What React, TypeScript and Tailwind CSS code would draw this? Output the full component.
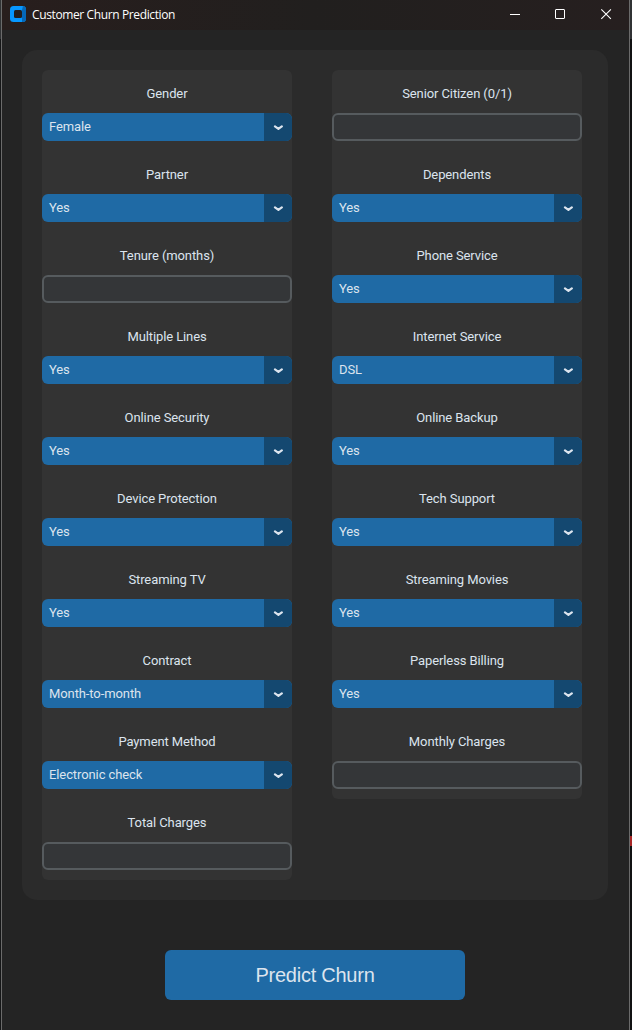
type Field = { label: string; value?: string };

const left: Field[] = [
  { label: "Gender", value: "Female" },
  { label: "Partner", value: "Yes" },
  { label: "Tenure (months)" },
  { label: "Multiple Lines", value: "Yes" },
  { label: "Online Security", value: "Yes" },
  { label: "Device Protection", value: "Yes" },
  { label: "Streaming TV", value: "Yes" },
  { label: "Contract", value: "Month-to-month" },
  { label: "Payment Method", value: "Electronic check" },
  { label: "Total Charges" },
];

const right: Field[] = [
  { label: "Senior Citizen (0/1)" },
  { label: "Dependents", value: "Yes" },
  { label: "Phone Service", value: "Yes" },
  { label: "Internet Service", value: "DSL" },
  { label: "Online Backup", value: "Yes" },
  { label: "Tech Support", value: "Yes" },
  { label: "Streaming Movies", value: "Yes" },
  { label: "Paperless Billing", value: "Yes" },
  { label: "Monthly Charges" },
];

function FieldRow({ label, value }: Field) {
  return (
    <div className="flex h-[81px] flex-col pt-2.5">
      <label className="h-7 text-center leading-[27px]">{label}</label>
      {value ? (
        <button className="mt-[5px] flex h-7 overflow-hidden rounded-md bg-[#1f6aa5] text-left">
          <span className="h-7 w-[222px] pl-[7px] leading-[27px]">{value}</span>
          <span className="flex h-7 w-7 items-center justify-center bg-[#144870]">
            <svg width="10" height="6" viewBox="0 0 10 6" className="mt-0.5" fill="none" stroke="#dce4ee" strokeWidth="2.2" strokeLinecap="round" strokeLinejoin="round">
              <path d="M2 1.4 L5.4 3.8 L8.8 1.4" />
            </svg>
          </span>
        </button>
      ) : (
        <input aria-label={label} className="mt-[5px] h-7 rounded-md border-2 border-[#565b5e] bg-[#343638] px-2 outline-none" />
      )}
    </div>
  );
}

function Column({ fields }: { fields: Field[] }) {
  return (
    <div className="w-[250px] rounded-md bg-[#333333]">
      {fields.map((f) => (
        <FieldRow key={f.label} {...f} />
      ))}
    </div>
  );
}

export default function App() {
  return (
    <div className="flex h-[1030px] w-[632px] bg-[#111213] font-['Roboto',sans-serif] text-[13px] tracking-[-0.1px] text-[#dce4ee]">
      <div className="flex w-px flex-col bg-[#151617]">
        <div className="h-[39px] bg-[#303234]" />
      </div>
      <div className="flex h-full w-[629px] flex-col border-x border-[#6b6b6b] bg-[#242424]">
        <header className="flex h-[30px] shrink-0 items-center bg-linear-to-r from-[#281e1d] via-[#211f1e] to-[#261f1f] pl-2">
          <svg width="16" height="16" viewBox="0 0 16 16" className="-mt-0.5">
            <rect width="16" height="16" rx="3.5" fill="#0797ff" />
            <path d="M13 0A3.5 3.5 0 0 1 16 3.5v9a3.5 3.5 0 0 1-3.5 3.5H12V4z" fill="#0568b8" />
            <rect x="4" y="4" width="8" height="8" rx="1.5" fill="#221e1d" />
          </svg>
          <h1 className="ml-1.5 grow font-['Open_Sans',sans-serif] text-[12px] leading-[30px] tracking-[-0.38px] text-white">
            Customer Churn Prediction
          </h1>
          <svg width="104" height="12" viewBox="0 0 104 12" className="mr-4 -mt-0.5" fill="none" stroke="#ffffff">
            <path d="M1 6.5h10" />
            <rect x="46.5" y="1.5" width="9" height="9" rx="0.5" />
            <path d="M92.3 1.3l9.6 9.6M101.9 1.3l-9.6 9.6" strokeWidth="1.1" />
          </svg>
        </header>
        <main className="flex flex-col items-center pt-5">
          <section className="-ml-px flex h-[850px] w-[586px] items-start gap-10 rounded-[15px] bg-[#2b2b2b] p-5">
            <Column fields={left} />
            <Column fields={right} />
          </section>
          <button className="mt-[50px] mr-px h-[50px] w-[300px] rounded-md bg-[#1f6aa5] font-['Liberation_Sans',sans-serif] text-[20px] tracking-[-0.25px]">
            Predict Churn
          </button>
        </main>
      </div>
      <div className="w-0.5 bg-[#111213]">
        <div className="h-[39px] bg-[#303234]" />
        <div className="mt-[797px] h-2.5 bg-[#a82727]" />
      </div>
    </div>
  );
}
